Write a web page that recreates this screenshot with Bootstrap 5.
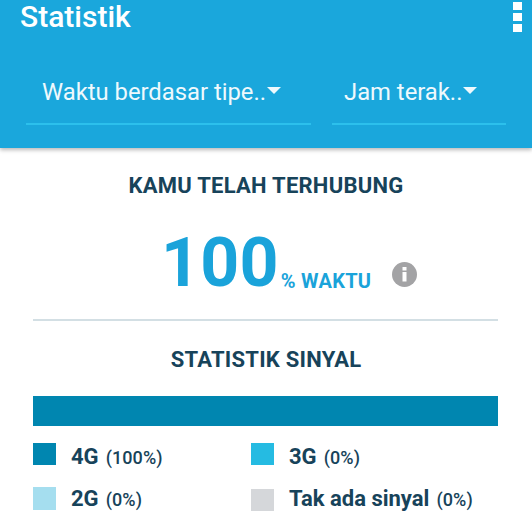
<!DOCTYPE html>
<html lang="id">
<head>
<meta charset="utf-8">
<title>Statistik</title>
<link href="https://cdn.jsdelivr.net/npm/bootstrap@5.3.0/dist/css/bootstrap.min.css" rel="stylesheet">
<style>
html,body{height:531px;overflow:hidden;background:#fff;font-family:Roboto,sans-serif;color:#17435a}
.app-head{height:148px;background:#1aa7dc;box-shadow:0 2px 4px rgba(0,0,0,.28);color:#fff}
.top-row{height:38px;padding:0 10px 0 20px}
.app-title{font-size:30px;font-weight:500;line-height:34px;margin:0}
.dots{gap:3px;padding-top:2px}
.dots i{display:block;width:9px;height:8px;background:#fff}
.pickers{padding:31px 26px 0 26px;gap:21px}
.picker{height:56px;border-bottom:2px solid #2cc0ec;font-size:23.8px;line-height:46px;color:#eef9fd;white-space:nowrap}
.picker.p1{width:285px;padding-left:16px}
.picker.p2{width:174px;padding-left:12px}
.caret-tri{display:inline-block;width:0;height:0;margin-left:1px;border-left:7px solid transparent;border-right:7px solid transparent;border-top:7px solid #eef9fd;vertical-align:6px}
.sec-title{font-size:22px;font-weight:700;letter-spacing:.25px;line-height:24px;text-align:center;margin:0}
.t1{padding-top:26px}
.big-row{height:70px;margin-top:30px;padding-left:161px;color:#1aa3da}
.big-num{font-size:68px;font-weight:700;line-height:70px;letter-spacing:.2px}
.big-lbl{font-size:20px;font-weight:700;margin-left:2px;line-height:24px;padding-bottom:5px;letter-spacing:.3px}
.info-ic{margin-left:21px;margin-bottom:11px}
.rule{margin:21px 34px 0 33px;height:2px;background:#d3dfe4}
.t2{padding-top:27px}
.bar{height:30px;margin:24px 34px 0 33px;background:#0086b0}
.legend{margin:17px 0 0 33px;display:grid;grid-template-columns:218px auto;row-gap:18px}
.leg-item{display:flex;align-items:flex-start;font-size:22px;font-weight:700;line-height:24px;height:26px}
.sw{width:23px;height:22px;margin-right:15px;flex:none}
.leg-item b{font-weight:700}
.leg-item span{font-size:18px;font-weight:500;margin-left:7px;letter-spacing:.1px;line-height:26px}
.row-a b,.row-a span{margin-top:2px}
.row-b b,.row-b span{margin-top:0}
.s1{background:#0086b0}.s2{background:#25bbe2}.s3{background:#a5deef;height:23px}.s4{background:#d5d7da;margin-top:2px}
</style>
</head>
<body>
<header class="app-head">
  <div class="top-row d-flex justify-content-between align-items-start">
    <h1 class="app-title">Statistik</h1>
    <div class="dots d-flex flex-column"><i></i><i></i><i></i></div>
  </div>
  <div class="pickers d-flex">
    <div class="picker p1">Waktu berdasar tipe..<span class="caret-tri"></span></div>
    <div class="picker p2">Jam terak..<span class="caret-tri"></span></div>
  </div>
</header>
<main>
  <h2 class="sec-title t1">KAMU TELAH TERHUBUNG</h2>
  <div class="big-row d-flex align-items-end">
    <span class="big-num">100</span>
    <span class="big-lbl">% WAKTU</span>
    <svg class="info-ic" width="25" height="25" viewBox="0 0 25 25"><circle cx="12.5" cy="12.5" r="12.5" fill="#a3a3a5"/><rect x="10.5" y="5" width="4" height="3.5" fill="#fff"/><rect x="10.5" y="10" width="4" height="9.5" fill="#fff"/></svg>
  </div>
  <div class="rule"></div>
  <h2 class="sec-title t2">STATISTIK SINYAL</h2>
  <div class="bar"></div>
  <div class="legend">
    <div class="leg-item row-a"><div class="sw s1"></div><b>4G</b><span>(100%)</span></div>
    <div class="leg-item row-a"><div class="sw s2"></div><b>3G</b><span>(0%)</span></div>
    <div class="leg-item row-b"><div class="sw s3"></div><b>2G</b><span>(0%)</span></div>
    <div class="leg-item row-b"><div class="sw s4"></div><b>Tak ada sinyal</b><span>(0%)</span></div>
  </div>
</main>
<script src="https://cdn.jsdelivr.net/npm/bootstrap@5.3.0/dist/js/bootstrap.bundle.min.js"></script>
</body>
</html>
